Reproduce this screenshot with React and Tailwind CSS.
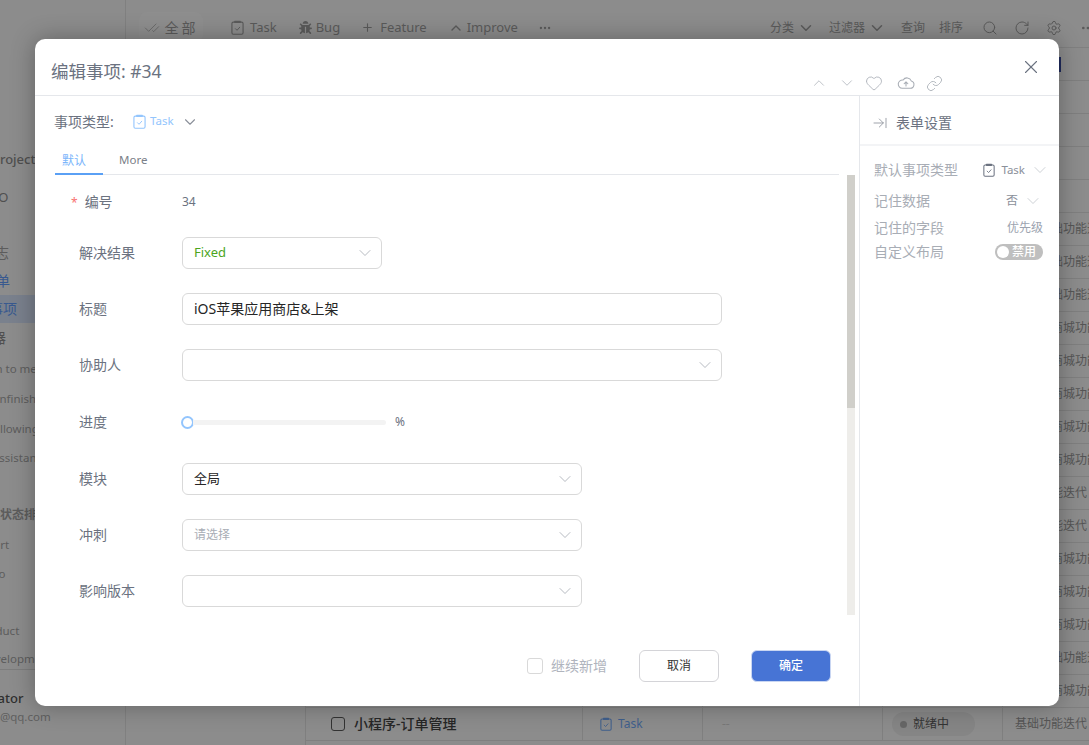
import React from 'react';
import {
  ArrowRightToLine, CheckCheck, ChevronDown, ChevronUp, Ellipsis,
  Heart, Link, Plus, RotateCw, Search, Settings, X,
} from 'lucide-react';
import { FaBug } from 'react-icons/fa';

const FONT = 'font-["Noto_Sans","Noto_Sans_CJK_SC",sans-serif]';

const categories = [
  '', '', '', '', '',
  '后台基础功能迭代', '后台基础功能迭代', '后台基础功能迭代',
  '小程序商城功能迭代', '小程序商城功能迭代', '小程序商城功能迭代', '小程序商城功能迭代', '小程序商城功能迭代',
  '基础功能迭代', '基础功能迭代',
  '小程序商城功能迭代', '小程序商城功能迭代', '小程序商城功能迭代',
  '后台基础功能迭代', '小程序商城功能迭代', '基础功能迭代',
];

const TaskIcon = ({ className }) => (
  <svg viewBox="0 0 14 16" fill="none" stroke="currentColor" strokeWidth="1.2" className={className}>
    <rect x="1" y="2.2" width="12" height="13" rx="1.5" />
    <rect x="3.5" y="0.6" width="7" height="2.6" rx="0.6" fill="currentColor" stroke="none" />
    <path d="M4.5 9l2 2 3.2-3.6" strokeWidth="1" />
  </svg>
);

const CloudIcon = ({ className }) => (
  <svg viewBox="0 0 24 24" fill="none" stroke="currentColor" strokeWidth="1.4" strokeLinecap="round" strokeLinejoin="round" className={className}>
    <path d="M17.5 19H7a5.5 5.5 0 1 1 1.2-10.9A6 6 0 0 1 19 9.2a5 5 0 0 1-1.5 9.8Z" />
    <path d="M12 16v-5.5M9.5 13 12 10.5 14.5 13" />
  </svg>
);

const Sidebar = () => (
  <aside className="w-[126px] shrink-0 border-r border-[#808080] overflow-hidden text-[11.5px] text-[#5c5c5c] whitespace-nowrap">
    <div className="h-[148px]" />
    <div className="h-[22px] leading-[22px] -ml-[8px] text-[13px] font-medium text-[#4f4f4f]">Project</div>
    <div className="h-[22px] leading-[22px] mt-[16px] -ml-[12px] text-[13px] text-[#4f4f4f]">OO</div>
    <div className="h-[22px] leading-[22px] mt-[34px] -ml-[47px] text-sm">工作日志</div>
    <div className="h-[22px] leading-[22px] mt-[6px] -ml-[18px] text-sm text-[#38598f]">清单</div>
    <div className="h-[28px] leading-[28px] mt-[3px] -ml-[11px] text-sm text-[#38598f] bg-[#7a818d]">事项</div>
    <div className="h-[22px] leading-[22px] mt-[4px] -ml-[36px] text-sm text-[#4f4f4f]">过滤器</div>
    <div className="h-[22px] leading-[22px] mt-[9px] -ml-[33px]">Assign to me</div>
    <div className="h-[22px] leading-[22px] mt-[8px] -ml-[9px]">Unfinished</div>
    <div className="h-[22px] leading-[22px] mt-[8px] -ml-[13px]">Following</div>
    <div className="h-[22px] leading-[22px] mt-[7px] -ml-[8px]">Assistance</div>
    <div className="h-[22px] leading-[22px] mt-[35px] -ml-[12px] text-xs font-bold">按状态排序</div>
    <div className="h-[22px] leading-[22px] mt-[8px] -ml-[13px]">Sort</div>
    <div className="h-[22px] leading-[22px] mt-[7px] -ml-[21px]">Todo</div>
    <div className="h-[22px] leading-[22px] mt-[35px] -ml-[23px]">Product</div>
    <div className="h-[22px] leading-[22px] mt-[6px] -ml-[20px]">Development</div>
    <div className="h-px mt-[-1px] bg-[#7d7d7d]" />
    <div className="h-[22px] leading-[22px] mt-[17px] -ml-[63px] text-[13px] font-medium text-[#2f2f2f]">Administrator</div>
    <div className="h-[20px] leading-[20px] mt-[-2px] -ml-[33px] text-[#5f5f5f]">12345@qq.com</div>
  </aside>
);

const Toolbar = () => (
  <header className="h-[48px] shrink-0 flex items-center pt-[8px] text-[13px] text-[#5a5a5a] border-b border-[#808080] whitespace-nowrap">
    <div className="ml-[13px] w-[64px] h-[31px] rounded-lg bg-[#8e8e8e] flex items-center justify-center gap-[5px] text-sm tracking-[3px]">
      <CheckCheck className="w-4 h-4" strokeWidth={1} />
      全部
    </div>
    <TaskIcon className="ml-[28px] w-[13px] h-[15px]" />
    <span className="ml-[6px]">Task</span>
    <FaBug className="ml-[22px] w-[13px] h-[13px]" />
    <span className="ml-[4px]">Bug</span>
    <Plus className="ml-[21px] w-[13px] h-[13px]" />
    <span className="ml-[6px]">Feature</span>
    <ChevronUp className="ml-[21px] w-[16px] h-[16px]" />
    <span className="ml-[3px]">Improve</span>
    <Ellipsis className="ml-[20px] w-[14px] h-[14px]" />
    <div className="ml-auto flex items-center text-xs">
      <span>分类</span>
      <ChevronDown className="ml-[3px] w-[18px] h-[18px]" />
      <span className="ml-[14px]">过滤器</span>
      <ChevronDown className="ml-[3px] w-[18px] h-[18px]" />
      <span className="ml-[15px]">查询</span>
      <span className="ml-[14px]">排序</span>
      <Search className="ml-[19px] w-4 h-4" strokeWidth={1.5} />
      <RotateCw className="ml-[16px] w-4 h-4" strokeWidth={1.5} />
      <Settings className="ml-[16px] w-4 h-4" strokeWidth={1.5} />
      <Ellipsis className="ml-[18px] -mr-[7px] w-4 h-4" />
    </div>
  </header>
);

const TableRow = ({ category, first, last }) => (
  <div className="h-[33px] shrink-0 flex border-b border-[#7f7f7f] text-xs text-[#555] whitespace-nowrap">
    <div className="w-[277px] shrink-0 border-r border-[#7f7f7f] flex items-center pl-[25px]">
      {last && (
        <>
          <span className="w-[14px] h-[14px] rounded-[3px] border border-[#333]" />
          <span className="ml-[9px] text-sm font-medium text-[#262626]">小程序-订单管理</span>
        </>
      )}
    </div>
    <div className="w-[120px] shrink-0 border-r border-[#7f7f7f] flex items-center pl-[17px] text-[#3f5f8c]">
      {last && (
        <>
          <TaskIcon className="w-[12px] h-[14px]" />
          <span className="ml-[6px]">Task</span>
        </>
      )}
    </div>
    <div className="w-[180px] shrink-0 border-r border-[#7f7f7f] flex items-center pl-[19px] text-[#777]">{last && '--'}</div>
    <div className="w-[120px] shrink-0 border-r border-[#7f7f7f] flex items-center pl-[9px]">
      {last && (
        <div className="w-[83px] h-[24px] rounded-full bg-[#858585] flex items-center pl-[8px] text-[#333]">
          <span className="w-[7px] h-[7px] rounded-full bg-[#666]" />
          <span className="ml-[6px]">就绪中</span>
        </div>
      )}
    </div>
    <div className="pl-[12px] flex items-center">
      {first && <span className="ml-[44px] w-[2px] h-[15px] bg-[#1f2a5c]" />}
      {category}
    </div>
  </div>
);

const SelectBox = ({ width, children }) => (
  <div className={`${width} h-8 rounded-md border border-[#d9d9d9] bg-white flex items-center justify-between pl-[11px] pr-[6px] text-[13px]`}>
    <span>{children}</span>
    <ChevronDown className="w-5 h-5 text-[#a8adb5]" strokeWidth={1} />
  </div>
);

const FieldRow = ({ label, height = 'h-8', spacing = 'mb-6', children }) => (
  <div className={`${height} ${spacing} flex items-center`}>
    <label className="w-[111px] shrink-0 pl-[8px] text-sm text-[#6b7280]">{label}</label>
    {children}
  </div>
);

const EditDialog = () => (
  <div className="absolute left-[35px] top-[39px] w-[1024px] h-[667px] bg-white rounded-[10px] shadow-[0_0_24px_rgba(0,0,0,0.3)] flex flex-col overflow-hidden">
    <div className="h-[57px] shrink-0 relative border-b border-[#e5e7eb] flex items-center pl-4 pt-[8px]">
      <h2 className="text-[17.5px] font-normal text-[#6b7280]">编辑事项: #34</h2>
      <div className="absolute left-[775px] top-[35px] h-[18px] flex items-center text-[#a8adb5]">
        <ChevronUp className="w-[18px] h-[18px]" strokeWidth={1} />
        <ChevronDown className="ml-[10px] w-[18px] h-[18px]" strokeWidth={1} />
        <Heart className="ml-[9px] w-[18px] h-[18px]" strokeWidth={1.1} />
        <CloudIcon className="ml-[14px] w-[18px] h-[18px]" />
        <Link className="ml-[11px] w-[17px] h-[17px]" strokeWidth={1.2} />
      </div>
      <button className="absolute right-[17px] top-[17px] text-[#6b7280]">
        <X className="w-[22px] h-[22px]" strokeWidth={1.2} />
      </button>
    </div>
    <div className="flex-1 flex min-h-0">
      <div className="w-[825px] shrink-0 flex flex-col border-r border-[#e5e7eb]">
        <div className="h-[51px] shrink-0 flex items-center pl-[19px] text-sm text-[#6b7280]">
          <span className="w-[79px]">事项类型:</span>
          <TaskIcon className="w-[13px] h-[15px] text-[#93c5fd]" />
          <span className="ml-[4px] text-[11.5px] text-[#93c5fd]">Task</span>
          <ChevronDown className="ml-[7px] w-[18px] h-[18px] text-[#8b909a]" strokeWidth={1.5} />
        </div>
        <div className="h-[28px] shrink-0 mx-5 border-b border-[#e5e7eb] flex items-end text-xs">
          <div className="w-[48px] h-[28px] pl-[7px] leading-[28px] text-[#7ab5fb] border-b-2 border-[#5aa0f5] -mb-px">默认</div>
          <div className="ml-4 h-[28px] leading-[28px] text-[11.5px] text-[#7b8088]">More</div>
        </div>
        <div className="h-[440px] shrink-0 flex overflow-hidden">
          <div className="flex-1 pl-9 pt-[11px] text-[#262626]">
            <div className="h-8 mb-[19px] flex items-center">
              <label className="w-[111px] shrink-0 text-sm text-[#6b7280]">
                <span className="text-[#f87171] mr-[7px] text-xs">*</span>编号
              </label>
              <span className="text-xs text-[#6b7280]">34</span>
            </div>
            <FieldRow label="解决结果">
              <SelectBox width="w-[200px]"><span className="text-[#4ca51e]">Fixed</span></SelectBox>
            </FieldRow>
            <FieldRow label="标题">
              <div className="w-[540px] h-8 rounded-md border border-[#d9d9d9] flex items-center pl-[11px] text-sm">iOS苹果应用商店&amp;上架</div>
            </FieldRow>
            <FieldRow label="协助人">
              <SelectBox width="w-[540px]" />
            </FieldRow>
            <FieldRow label="进度" height="h-[34px]">
              <div className="w-[205px] flex items-center -ml-[1px]">
                <span className="w-[13px] h-[13px] rounded-full border-2 border-[#93c5fd] bg-white shrink-0" />
                <span className="-ml-px w-[194px] h-[5px] rounded-r-full bg-[#f3f3f3]" />
              </div>
              <span className="ml-[9px] text-xs text-[#6b7280]">%</span>
            </FieldRow>
            <FieldRow label="模块">
              <SelectBox width="w-[400px]">全局</SelectBox>
            </FieldRow>
            <FieldRow label="冲刺">
              <SelectBox width="w-[400px]"><span className="text-xs text-[#a8adb5]">请选择</span></SelectBox>
            </FieldRow>
            <FieldRow label="影响版本">
              <SelectBox width="w-[400px]" />
            </FieldRow>
          </div>
          <div className="w-[8px] mr-[4px] bg-[#eeedea] shrink-0">
            <div className="h-[233px] bg-[#d0cfca]" />
          </div>
        </div>
        <div className="flex-1 flex items-start pt-[35px] pl-[492px]">
          <div className="h-8 flex items-center">
            <span className="w-4 h-4 rounded-[3px] border border-[#d9d9d9]" />
            <span className="ml-2 text-sm text-[#b0b4bd]">继续新增</span>
          </div>
          <button className="ml-[32px] w-[80px] h-8 rounded-md border border-[#d4d4d8] text-xs text-[#333]">取消</button>
          <button className="ml-[32px] w-[80px] h-8 rounded-md bg-[#4774d5] border border-[#c9d6f2] text-xs font-medium text-white">确定</button>
        </div>
      </div>
      <div className="flex-1">
        <div className="h-[50px] flex items-center pl-3 pt-[6px] border-b-2 border-[#f3f4f6] text-[#6b7280]">
          <ArrowRightToLine className="w-4 h-4 text-[#8b909a]" strokeWidth={1.25} />
          <span className="ml-[8px] text-sm">表单设置</span>
        </div>
        <div className="pl-[14px] pr-4 text-sm text-[#a8adb5]">
          <div className="h-6 mt-[12px] flex items-center justify-between">
            <span>默认事项类型</span>
            <div className="flex items-center text-[11.5px] text-[#8b909a]">
              <TaskIcon className="w-[12px] h-[14px] text-[#6b7280]" />
              <span className="ml-[6px]">Task</span>
              <ChevronDown className="ml-[5px] -mr-[7px] w-[20px] h-[20px] text-[#c4c8ce]" strokeWidth={1} />
            </div>
          </div>
          <div className="h-6 mt-[7px] flex items-center justify-between">
            <span>记住数据</span>
            <div className="flex items-center text-xs text-[#8b909a]">
              <span>否</span>
              <ChevronDown className="ml-[5px] w-[20px] h-[20px] text-[#c4c8ce]" strokeWidth={1} />
            </div>
          </div>
          <div className="h-6 mt-[3px] flex items-center justify-between">
            <span>记住的字段</span>
            <span className="text-xs text-[#9ca3af]">优先级</span>
          </div>
          <div className="h-6 flex items-center justify-between">
            <span>自定义布局</span>
            <div className="w-[48px] h-4 rounded-full bg-[#bfbfbf] flex items-center pl-[2px] text-xs font-medium leading-none text-white">
              <span className="w-3 h-3 rounded-full bg-white" />
              <span className="ml-[3px]">禁用</span>
            </div>
          </div>
        </div>
      </div>
    </div>
  </div>
);

export default function App() {
  return (
    <div className={`relative h-screen w-full overflow-hidden flex bg-[#8c8c8c] ${FONT}`}>
      <Sidebar />
      <div className="flex-1 min-w-0 flex flex-col">
        <Toolbar />
        <div className="flex-1 flex min-h-0">
          <div className="w-[180px] shrink-0 border-r border-[#7f7f7f]" />
          <div className="flex-1 min-w-0 flex flex-col overflow-hidden">
            {categories.map((category, i) => (
              <TableRow key={i} category={category} first={i === 0} last={i === categories.length - 1} />
            ))}
          </div>
        </div>
      </div>
      <EditDialog />
    </div>
  );
}
